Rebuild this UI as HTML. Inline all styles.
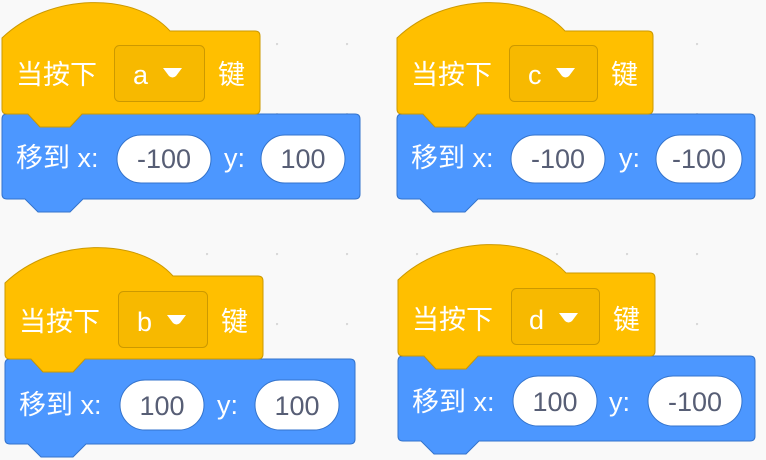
<!DOCTYPE html>
<html><head><meta charset="utf-8"><style>
html,body{margin:0;padding:0;width:766px;height:460px;overflow:hidden;background:#f9f9f9;}
svg{display:block}
text{font-family:"Liberation Sans","Noto Sans CJK SC",sans-serif;}
.w{fill:#fff;font-size:27px}
.n{fill:#575e75;font-size:27px;text-anchor:middle}
</style></head><body>
<svg width="766" height="460" viewBox="0 0 766 460" xmlns="http://www.w3.org/2000/svg">
<defs>
<pattern id="dots" x="67" y="44" width="70" height="70" patternUnits="userSpaceOnUse">
<circle cx="1" cy="1" r="1.2" fill="#d8d8d8"/>
</pattern>
</defs>
<rect width="766" height="460" fill="url(#dots)" transform="translate(-1,-1)"/>

<g transform="translate(0,0)">
<path d="M2,119 Q2,114 7,114 L28,114 L40,127 L70,127 L82,114 L355,114 Q360,114 360,119 L360,194 Q360,199 355,199 L83,199 L70,212 L38,212 L25,199 L7,199 Q2,199 2,194 Z" fill="#4c97ff" stroke="#3373cc"/>
<path d="M2,38 C50,-8 135,-8 170,31 L255,31 Q260,31 260,36 L260,109 Q260,114 255,114 L82,114 L70,127 L40,127 L28,114 L7,114 Q2,114 2,109 Z" fill="#ffbf00" stroke="#cc9900"/>
<text class="w" x="16" y="84">当按下</text>
<rect x="114.5" y="45.5" width="90" height="56" rx="5" fill="#f7b900" stroke="#cc9900"/>
<text class="w" x="133" y="84">a</text>
<path d="M163,68 L182,68 L176,76 Q172.5,79 169,76 Z" fill="#fff"/>
<text class="w" x="218" y="84">键</text>
<text class="w" x="16" y="167">移到 x:</text>
<rect x="117" y="135" width="94" height="48" rx="24" fill="#fff" stroke="#3373cc"/>
<text class="n" x="164" y="168">-100</text>
<text class="w" x="224" y="167">y:</text>
<rect x="261" y="135" width="84" height="48" rx="24" fill="#fff" stroke="#3373cc"/>
<text class="n" x="303" y="168">100</text>
</g>

<g transform="translate(395,0)">
<path d="M2,119 Q2,114 7,114 L28,114 L40,127 L70,127 L82,114 L355,114 Q360,114 360,119 L360,194 Q360,199 355,199 L83,199 L70,212 L38,212 L25,199 L7,199 Q2,199 2,194 Z" fill="#4c97ff" stroke="#3373cc"/>
<path d="M2,38 C50,-8 135,-8 170,31 L253,31 Q258,31 258,36 L258,109 Q258,114 253,114 L82,114 L70,127 L40,127 L28,114 L7,114 Q2,114 2,109 Z" fill="#ffbf00" stroke="#cc9900"/>
<text class="w" x="16" y="84">当按下</text>
<rect x="114.5" y="45.5" width="88" height="56" rx="5" fill="#f7b900" stroke="#cc9900"/>
<text class="w" x="133" y="84">c</text>
<path d="M161,68 L180,68 L174,76 Q170.5,79 167,76 Z" fill="#fff"/>
<text class="w" x="216" y="84">键</text>
<text class="w" x="16" y="167">移到 x:</text>
<rect x="116" y="135" width="94" height="48" rx="24" fill="#fff" stroke="#3373cc"/>
<text class="n" x="163" y="168">-100</text>
<text class="w" x="224" y="167">y:</text>
<rect x="261" y="135" width="86" height="48" rx="24" fill="#fff" stroke="#3373cc"/>
<text class="n" x="304" y="168">-100</text>
</g>

<g transform="translate(3,245)">
<path d="M2,119 Q2,114 7,114 L28,114 L40,127 L70,127 L82,114 L347,114 Q352,114 352,119 L352,194 Q352,199 347,199 L83,199 L70,212 L38,212 L25,199 L7,199 Q2,199 2,194 Z" fill="#4c97ff" stroke="#3373cc"/>
<path d="M2,38 C50,-8 135,-8 170,31 L255,31 Q260,31 260,36 L260,109 Q260,114 255,114 L82,114 L70,127 L40,127 L28,114 L7,114 Q2,114 2,109 Z" fill="#ffbf00" stroke="#cc9900"/>
<text class="w" x="16" y="86">当按下</text>
<rect x="115.5" y="46.5" width="89" height="56" rx="5" fill="#f7b900" stroke="#cc9900"/>
<text class="w" x="134" y="86">b</text>
<path d="M164,70 L183,70 L177,78 Q173.5,81 170,78 Z" fill="#fff"/>
<text class="w" x="218" y="86">键</text>
<text class="w" x="16" y="169">移到 x:</text>
<rect x="117" y="135" width="84" height="50" rx="25" fill="#fff" stroke="#3373cc"/>
<text class="n" x="159" y="170">100</text>
<text class="w" x="214" y="169">y:</text>
<rect x="252" y="135" width="84" height="50" rx="25" fill="#fff" stroke="#3373cc"/>
<text class="n" x="294" y="170">100</text>
</g>

<g transform="translate(396,242)">
<path d="M2,119 Q2,114 7,114 L28,114 L40,127 L70,127 L82,114 L354,114 Q359,114 359,119 L359,194 Q359,199 354,199 L83,199 L70,212 L38,212 L25,199 L7,199 Q2,199 2,194 Z" fill="#4c97ff" stroke="#3373cc"/>
<path d="M2,38 C50,-8 135,-8 170,31 L254,31 Q259,31 259,36 L259,109 Q259,114 254,114 L82,114 L70,127 L40,127 L28,114 L7,114 Q2,114 2,109 Z" fill="#ffbf00" stroke="#cc9900"/>
<text class="w" x="16" y="87">当按下</text>
<rect x="115.5" y="46.5" width="88" height="56" rx="5" fill="#f7b900" stroke="#cc9900"/>
<text class="w" x="133" y="87">d</text>
<path d="M163,71 L182,71 L176,79 Q172.5,82 169,79 Z" fill="#fff"/>
<text class="w" x="217" y="87">键</text>
<text class="w" x="16" y="169">移到 x:</text>
<rect x="117" y="134" width="84" height="50" rx="25" fill="#fff" stroke="#3373cc"/>
<text class="n" x="159" y="169">100</text>
<text class="w" x="213" y="169">y:</text>
<rect x="252" y="134" width="94" height="50" rx="25" fill="#fff" stroke="#3373cc"/>
<text class="n" x="299" y="169">-100</text>
</g>
</svg>
</body></html>
